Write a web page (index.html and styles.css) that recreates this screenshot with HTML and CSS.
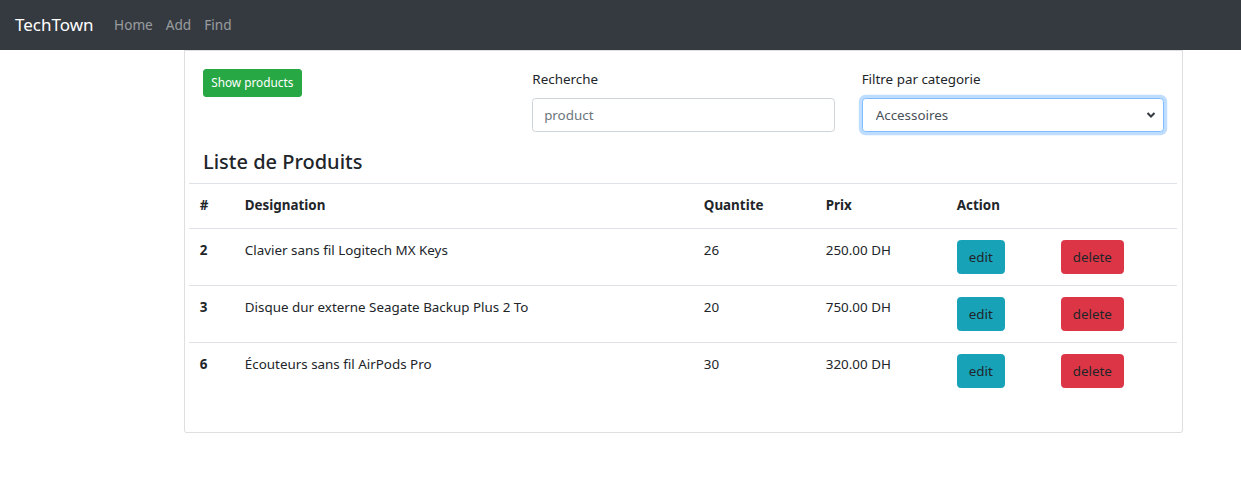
FILE: index.html
```html
<!DOCTYPE html>
<html lang="fr">
<head>
<meta charset="utf-8">
<title>TechTown</title>
<link rel="stylesheet" href="styles.css">
</head>
<body>
<nav class="navbar">
  <span class="brand">TechTown</span>
  <a class="nav-link">Home</a>
  <a class="nav-link">Add</a>
  <a class="nav-link">Find</a>
</nav>
<div class="card">
  <div class="card-body">
    <div class="row">
      <div class="col"><button class="btn btn-success btn-sm">Show products</button></div>
      <div class="col">
        <label class="label">Recherche</label>
        <input class="form-control" placeholder="product">
      </div>
      <div class="col">
        <label class="label">Filtre par categorie</label>
        <div class="select-wrap">
          <select class="form-control select focus">
            <option>Accessoires</option>
          </select>
          <svg class="chev" width="10" height="8" viewBox="0 0 10 8"><path d="M1.5 2 L5 5.5 L8.5 2" fill="none" stroke="#343a40" stroke-width="2"/></svg>
        </div>
      </div>
    </div>
    <h4 class="title">Liste de Produits</h4>
    <table class="table">
      <thead>
        <tr><th class="c1">#</th><th class="c2">Designation</th><th class="c3">Quantite</th><th class="c4">Prix</th><th class="c5">Action</th><th class="c6"></th></tr>
      </thead>
      <tbody>
        <tr><th>2</th><td>Clavier sans fil Logitech MX Keys</td><td>26</td><td>250.00 DH</td><td><button class="btn btn-info">edit</button></td><td><button class="btn btn-danger">delete</button></td></tr>
        <tr><th>3</th><td>Disque dur externe Seagate Backup Plus 2 To</td><td>20</td><td>750.00 DH</td><td><button class="btn btn-info">edit</button></td><td><button class="btn btn-danger">delete</button></td></tr>
        <tr><th>6</th><td>Écouteurs sans fil AirPods Pro</td><td>30</td><td>320.00 DH</td><td><button class="btn btn-info">edit</button></td><td><button class="btn btn-danger">delete</button></td></tr>
      </tbody>
    </table>
  </div>
</div>
</body>
</html>
```
FILE: styles.css
```css
* { box-sizing: border-box; }
body {
  margin: 0;
  font-family: "Noto Sans", "Open Sans", sans-serif;
  font-size: 13.4px;
  line-height: 1.5;
  color: #212529;
  background: #fff;
}
.navbar {
  height: 50px;
  background: #343a40;
  display: flex;
  align-items: center;
  padding: 0 15px;
}
.brand {
  color: #fff;
  font-size: 17px;
  margin-right: 14px;
}
.nav-link {
  color: rgba(255,255,255,.5);
  font-size: 13.6px;
  padding: 0 6.5px;
}
.card {
  margin-left: 184px;
  width: 999px;
  border: 1px solid rgba(0,0,0,.125);
  border-radius: 0 0 3.6px 3.6px;
  background: #fff;
}
.card-body {
  padding: 18px 18px 18px 18px;
}
.row {
  display: flex;
  margin: 0 -13.5px;
}
.col {
  flex: 1 1 0;
  padding: 0 13.5px;
}
.btn {
  display: inline-block;
  font-family: inherit;
  border: 1px solid transparent;
  border-radius: 3.6px;
  font-size: 13.4px;
  line-height: 1.5;
  padding: 5.4px 10.8px;
  height: 34px;
  color: #212529;
  cursor: pointer;
}
.btn-sm {
  height: 28px;
  font-size: 11.8px;
  padding: 3.6px 7.2px;
  border-radius: 3px;
}
.btn-success { background: #28a745; color: #fff; border-color: #28a745; }
.btn-info { background: #17a2b8; border-color: #17a2b8; width: 48px; padding: 0; }
.btn-danger { background: #dc3545; border-color: #dc3545; width: 63px; padding: 0; }
.label {
  display: block;
  margin-bottom: 7.2px;
  line-height: 21.6px;
}
.form-control {
  display: block;
  width: 100%;
  height: 34px;
  padding: 5.4px 10.8px;
  font-family: inherit;
  font-size: 13.4px;
  color: #495057;
  background: #fff;
  border: 1px solid #ced4da;
  border-radius: 3.6px;
  outline: none;
}
.form-control::placeholder { color: #6c757d; }
.select-wrap { position: relative; }
.select {
  -webkit-appearance: none;
  appearance: none;
  padding-left: 13px;
}
.focus {
  border-color: #80bdff;
  box-shadow: 0 0 0 3.2px rgba(0,123,255,.25);
}
.chev {
  position: absolute;
  right: 8px;
  top: 13px;
}
.title {
  font-size: 20px;
  font-weight: 500;
  line-height: 1.2;
  margin: 18px 0 9px 0;
}
.table {
  border-collapse: collapse;
  width: 988px;
  margin-left: -14px;
  margin-bottom: 14.4px;
}
.table th, .table td {
  text-align: left;
  vertical-align: top;
  padding: 11px 10.8px;
  line-height: 21.6px;
  border-top: 1px solid #dee2e6;
}
.table thead th { border-bottom: 1px solid #dee2e6; padding: 11.5px 10.8px; }
.table th { font-weight: 700; }
.c1 { width: 45px; }
.c2 { width: 459px; }
.c3 { width: 122px; }
.c4 { width: 131px; }
.c5 { width: 104px; }
.c6 { width: 127px; }
```
